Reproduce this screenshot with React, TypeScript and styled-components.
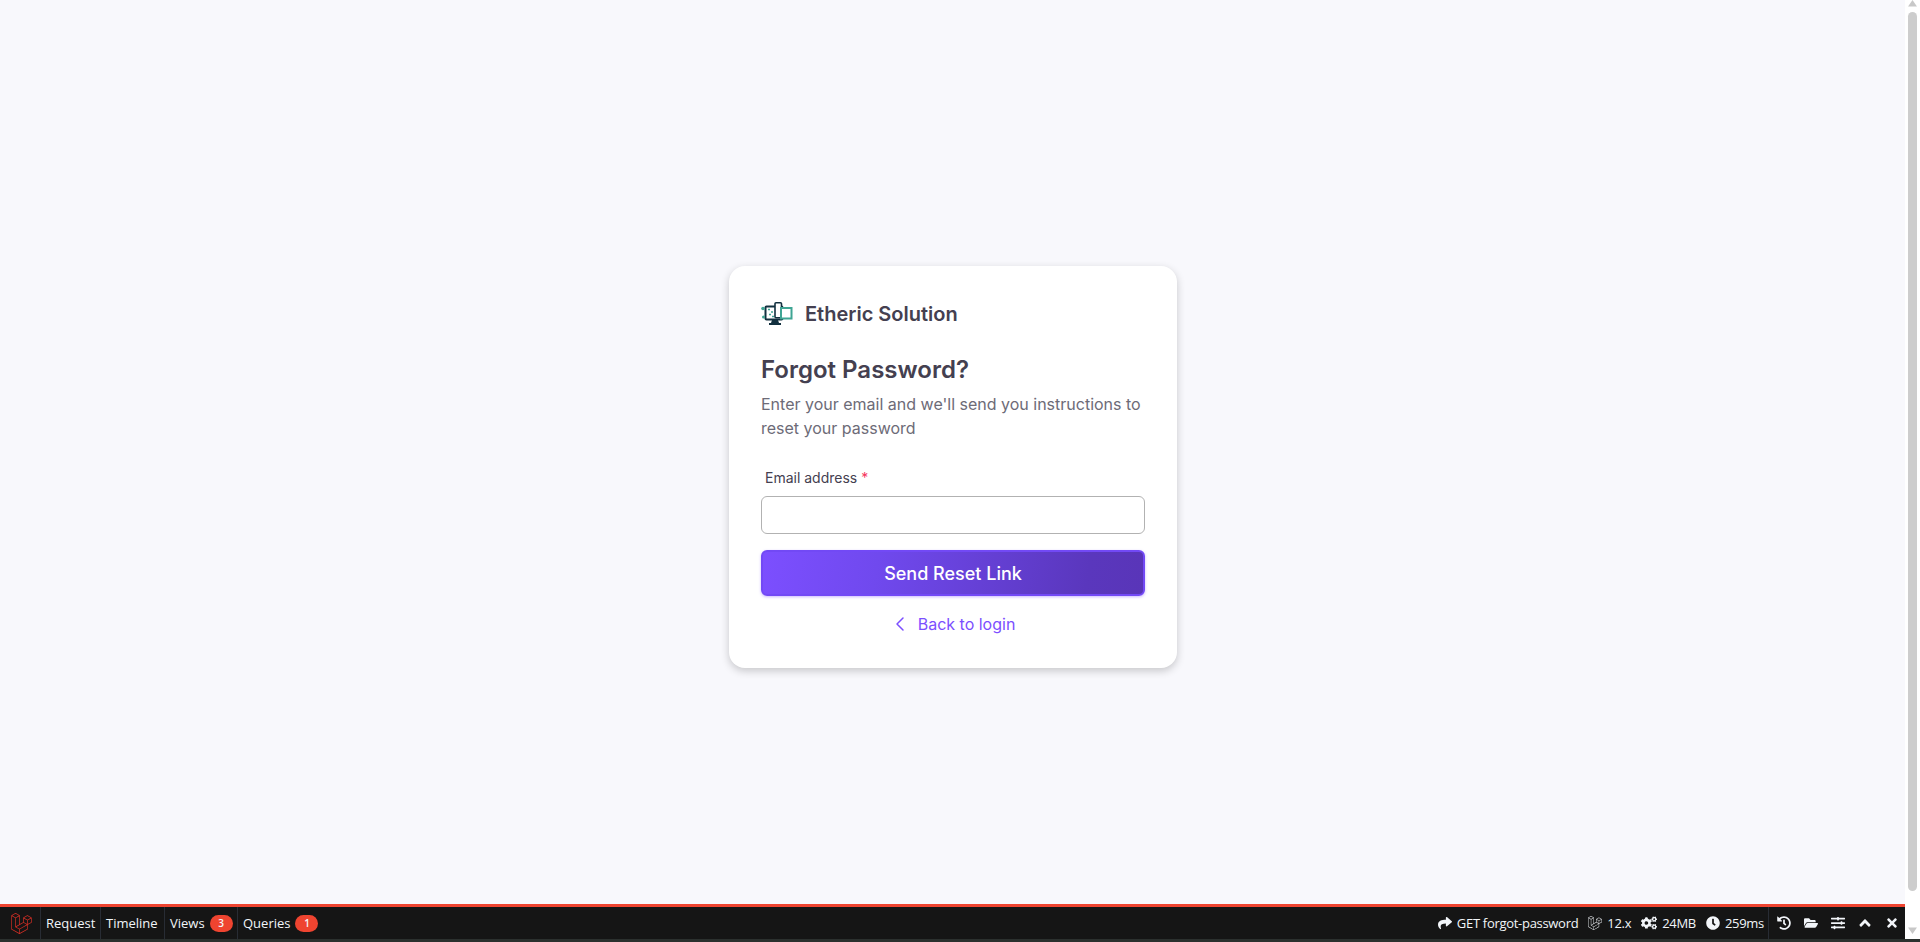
import React from 'react';
import styled, { createGlobalStyle } from 'styled-components';
import { FaLaravel, FaShare, FaCogs, FaClock, FaHistory, FaFolderOpen, FaSlidersH, FaAngleUp, FaTimes } from 'react-icons/fa';
import { SiLaravel } from 'react-icons/si';
import { ChevronLeft } from 'lucide-react';

const GlobalStyle = createGlobalStyle`
  html, body, #root {
    margin: 0;
    height: 100%;
    overflow: hidden;
  }
  * {
    box-sizing: border-box;
  }
`;

const Screen = styled.div`
  height: 942px;
  display: flex;
  flex-direction: column;
  background: #2b302e;
`;

const Viewport = styled.div`
  height: 939px;
  display: flex;
`;

const Main = styled.div`
  flex: 1;
  display: flex;
  flex-direction: column;
  min-width: 0;
`;

const Page = styled.main`
  flex: 1;
  background: #f8f8fc;
  display: flex;
  justify-content: center;
  align-items: center;
  padding-top: 30px;
  font-family: Inter, sans-serif;
`;

const Card = styled.section`
  width: 448px;
  height: 402px;
  margin-left: 1px;
  padding: 32px;
  background: #fff;
  border-radius: 16px;
  box-shadow: 0 3px 8px rgba(0, 0, 0, 0.2);
`;

const Brand = styled.div`
  display: flex;
  align-items: center;
  gap: 12px;
  height: 32px;
  margin-bottom: 24px;
`;

const BrandName = styled.span`
  font-size: 20px;
  font-weight: 600;
  color: #444050;
`;

const Title = styled.h1`
  margin: 0 0 6px;
  font-size: 24px;
  line-height: 32px;
  font-weight: 600;
  color: #444050;
`;

const Lead = styled.p`
  margin: 0 0 28px;
  font-size: 16px;
  line-height: 24px;
  color: #6d6b77;
`;

const Label = styled.label`
  display: block;
  padding-left: 4px;
  margin-bottom: 8px;
  font-size: 14px;
  line-height: 20px;
  color: #444050;
`;

const Required = styled.span`
  color: #f5365c;
`;

const Input = styled.input`
  display: block;
  width: 100%;
  height: 38px;
  margin-bottom: 16px;
  border: 1px solid #b2b2b2;
  border-radius: 6px;
  background: #fff;
  outline: none;
`;

const SubmitButton = styled.button`
  display: block;
  width: 100%;
  height: 46px;
  margin-bottom: 16px;
  border: 2px solid #7249f5;
  border-radius: 6px;
  background: linear-gradient(100deg, #7c4fff 0%, #7049ee 30%, #5a37bd 85%, #5935b8 100%);
  color: #fff;
  font-family: inherit;
  font-size: 18px;
  font-weight: 500;
  box-shadow: 0 1px 3px rgba(124, 79, 255, 0.4);
`;

const BackLink = styled.a`
  display: flex;
  justify-content: center;
  align-items: center;
  gap: 6px;
  height: 24px;
  padding-right: 3px;
  color: #7c4fff;
  font-size: 16px;
  text-decoration: none;
`;

const DebugBar = styled.footer`
  height: 35px;
  display: flex;
  justify-content: space-between;
  border-top: 3px solid #ef4430;
  background: #151515;
  color: #f2f5f9;
  font-family: "Open Sans", sans-serif;
  font-size: 13px;
`;

const BarGroup = styled.div`
  display: flex;
  align-items: stretch;
`;

const BarLogo = styled.div`
  width: 41px;
  display: flex;
  align-items: center;
  justify-content: center;
  padding-left: 2px;
  border-right: 1px solid #282c34;
  color: #d92f25;
  font-size: 21px;
`;

const BarTab = styled.div<{ $width: number; $last?: boolean }>`
  width: ${(p) => p.$width}px;
  display: flex;
  align-items: center;
  gap: 5px;
  padding-left: 5px;
  border-right: ${(p) => (p.$last ? 'none' : '1px solid #282c34')};
`;

const Badge = styled.span`
  min-width: 23px;
  height: 17px;
  display: flex;
  align-items: center;
  justify-content: center;
  border-radius: 9px;
  background: #ef4430;
  font-size: 10px;
  font-weight: 600;
`;

const BarStats = styled.div`
  display: flex;
  align-items: center;
  gap: 10px;
  padding-right: 4px;
  border-right: 1px solid #282c34;
`;

const Stat = styled.div`
  display: flex;
  align-items: center;
  gap: 5px;
  font-size: 13px;
  letter-spacing: -0.3px;
`;

const BarActions = styled.div`
  display: flex;
  align-items: center;
  padding-left: 1px;
`;

const BarAction = styled.div`
  width: 27px;
  display: flex;
  align-items: center;
  justify-content: center;
  font-size: 14px;
`;

const Scrollbar = styled.div`
  width: 15px;
  display: flex;
  flex-direction: column;
  align-items: center;
  background: #fff;
`;

const ScrollArrow = styled.svg`
  width: 15px;
  height: 10px;
  flex: none;
  fill: #c8c8c8;
`;

const ScrollThumb = styled.div`
  width: 9px;
  height: 879px;
  margin-top: 2px;
  margin-bottom: auto;
  border-radius: 5px;
  background: #cdcdcd;
`;

const BottomArrow = styled(ScrollArrow)`
  margin-bottom: 5px;
`;

function BrandLogo() {
  return (
    <svg width="32" height="24" viewBox="0 0 32 24" fill="none">
      <rect x="4.5" y="4.5" width="17" height="13" rx="1" stroke="#12303f" strokeWidth="2" />
      <path d="M11 18h6l1 3h2v2H8v-2h2z" fill="#12303f" />
      <rect x="14" y="0.8" width="6.5" height="15" rx="1" fill="#fff" stroke="#12303f" strokeWidth="1.6" />
      <rect x="20" y="6" width="10.5" height="10.5" fill="#fff" stroke="#3fa594" strokeWidth="2" />
      <circle cx="2" cy="6.5" r="1.8" fill="#3fa594" />
      <circle cx="2.5" cy="15" r="1.5" fill="#3fa594" />
      <path d="M7 7.5h2M10 10h2M8 12.5h2M11 14.5h2" stroke="#3fa594" strokeWidth="1.6" />
    </svg>
  );
}

export default function App() {
  return (
    <>
      <GlobalStyle />
      <Screen>
        <Viewport>
          <Main>
            <Page>
              <Card>
                <Brand>
                  <BrandLogo />
                  <BrandName>Etheric Solution</BrandName>
                </Brand>
                <Title>Forgot Password?</Title>
                <Lead>Enter your email and we'll send you instructions to reset your password</Lead>
                <Label>
                  Email address <Required>*</Required>
                </Label>
                <Input type="email" />
                <SubmitButton>Send Reset Link</SubmitButton>
                <BackLink href="#">
                  <ChevronLeft size={24} strokeWidth={1.5} />
                  Back to login
                </BackLink>
              </Card>
            </Page>
            <DebugBar>
              <BarGroup>
                <BarLogo>
                  <SiLaravel />
                </BarLogo>
                <BarTab $width={60}>Request</BarTab>
                <BarTab $width={64}>Timeline</BarTab>
                <BarTab $width={73}>
                  Views <Badge>3</Badge>
                </BarTab>
                <BarTab $width={90} $last>
                  Queries <Badge>1</Badge>
                </BarTab>
              </BarGroup>
              <BarGroup>
                <BarStats>
                  <Stat>
                    <FaShare size={14} />
                    GET forgot-password
                  </Stat>
                  <Stat>
                    <FaLaravel size={14} />
                    12.x
                  </Stat>
                  <Stat>
                    <FaCogs size={16} />
                    24MB
                  </Stat>
                  <Stat>
                    <FaClock size={14} />
                    259ms
                  </Stat>
                </BarStats>
                <BarActions>
                  <BarAction>
                    <FaHistory />
                  </BarAction>
                  <BarAction>
                    <FaFolderOpen />
                  </BarAction>
                  <BarAction>
                    <FaSlidersH />
                  </BarAction>
                  <BarAction>
                    <FaAngleUp size={18} />
                  </BarAction>
                  <BarAction>
                    <FaTimes />
                  </BarAction>
                </BarActions>
              </BarGroup>
            </DebugBar>
          </Main>
          <Scrollbar>
            <ScrollArrow viewBox="0 0 15 10">
              <path d="M7.5 0l4.5 6.5H3z" />
            </ScrollArrow>
            <ScrollThumb />
            <BottomArrow viewBox="0 0 15 10">
              <path d="M7.5 10L3 3.5h9z" />
            </BottomArrow>
          </Scrollbar>
        </Viewport>
      </Screen>
    </>
  );
}
